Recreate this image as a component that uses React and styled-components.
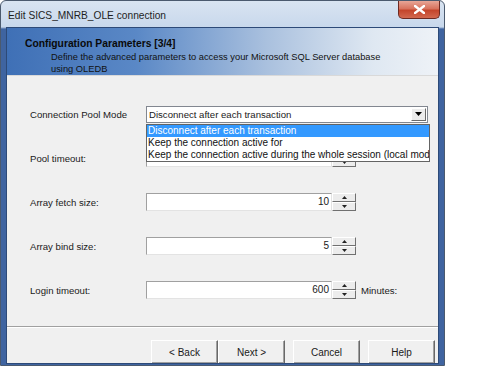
import React from 'react'
import styled, { createGlobalStyle } from 'styled-components'

const Global = createGlobalStyle`
  html, body {
    margin: 0;
    padding: 0;
    background: #ffffff;
    overflow: hidden;
  }
  body {
    font-family: "Liberation Sans", Arial, sans-serif;
    font-size: 9.6px;
    color: #1a1a1a;
  }
`

const options = [
  'Disconnect after each transaction',
  'Keep the connection active for',
  'Keep the connection active during the whole session (local mode only)',
]

const fields = [
  { label: 'Pool timeout:', value: '', unit: '' },
  { label: 'Array fetch size:', value: '10', unit: '' },
  { label: 'Array bind size:', value: '5', unit: '' },
  { label: 'Login timeout:', value: '600', unit: 'Minutes:' },
]

const Spinner = () => (
  <Spin>
    <SpinBtn>
      <svg width="5" height="3" viewBox="0 0 5 3"><path d="M2.5 0 L5 3 L0 3 Z" fill="#222" /></svg>
    </SpinBtn>
    <SpinBtn>
      <svg width="5" height="3" viewBox="0 0 5 3"><path d="M0 0 L5 0 L2.5 3 Z" fill="#222" /></svg>
    </SpinBtn>
  </Spin>
)

const App = () => {
  return (
    <>
      <Global />
      <Window>
        <TitleBar>
          <Title>Edit SICS_MNRB_OLE connection</Title>
          <Close>
            <svg width="11" height="9" viewBox="0 0 11 9">
              <path d="M1 1 L10 8 M10 1 L1 8" stroke="#fff" strokeWidth="2.4" strokeLinecap="square" />
            </svg>
          </Close>
        </TitleBar>
        <Client>
          <Banner>
            <BannerTitle>Configuration Parameters [3/4]</BannerTitle>
            <BannerText>
              Define the advanced parameters to access your Microsoft SQL Server database<br />using OLEDB
            </BannerText>
          </Banner>
          <Body>
            <Form>
              <Label>Connection Pool Mode</Label>
              <SelectWrap>
                <Select>
                  <span>{options[0]}</span>
                  <Arrow>
                    <svg width="7" height="4" viewBox="0 0 7 4"><path d="M0 0 L7 0 L3.5 4 Z" fill="#000" /></svg>
                  </Arrow>
                </Select>
                <DropList>
                  {options.map((o, i) => (
                    <Option key={o} active={i === 0}>{o}</Option>
                  ))}
                </DropList>
              </SelectWrap>
              {fields.map(f => (
                <React.Fragment key={f.label}>
                  <Label>{f.label}</Label>
                  <FieldRow>
                    <Input>{f.value}</Input>
                    <Spinner />
                    {f.unit && <Unit>{f.unit}</Unit>}
                  </FieldRow>
                </React.Fragment>
              ))}
            </Form>
            <Separator />
            <Buttons>
              <Button>&lt; Back</Button>
              <Button>Next &gt;</Button>
              <Button gap>Cancel</Button>
              <Button gap>Help</Button>
            </Buttons>
          </Body>
        </Client>
      </Window>
    </>
  )
}

export default App

const Window = styled.div`
width: 445px;
height: 366px;
box-sizing: border-box;
border: 1px solid #4b5a6e;
border-radius: 6px 6px 0 0;
background: linear-gradient(to bottom, #d9e4f1 0px, #c8d8ec 26px, #3f64a0 28px, #3f64a0 100%);
display: flex;
flex-direction: column;
padding: 0 5px 1px 5px;
`

const TitleBar = styled.div`
height: 26px;
display: flex;
align-items: flex-start;
flex-shrink: 0;
`

const Title = styled.div`
font-size: 10.2px;
color: #1e1e1e;
padding: 9px 0 0 2px;
`

const Close = styled.div`
margin-left: auto;
margin-right: -1px;
width: 42px;
height: 18px;
box-sizing: border-box;
border: 1px solid #6d2a22;
border-top: none;
border-radius: 0 0 5px 5px;
background: linear-gradient(to bottom, #e8a697 0%, #d8735e 45%, #c4452b 55%, #d2684f 100%);
display: flex;
align-items: center;
justify-content: center;
`

const Client = styled.div`
flex: 1;
display: flex;
flex-direction: column;
border: 1px solid #2d4a78;
background: #f0f0f0;
min-height: 0;
overflow: hidden;
`

const Banner = styled.div`
height: 51px;
box-sizing: border-box;
padding: 10px 0 0 18px;
background: linear-gradient(to right, #3f70b6 0%, #5a88c6 30%, #a9c0de 60%, #dfe8f2 85%, #eef2f7 100%);
border-bottom: 1px solid #d9d9d9;
`

const BannerTitle = styled.div`
font-weight: bold;
font-size: 10.3px;
color: #0a0a0a;
`

const BannerText = styled.div`
margin-top: 2px;
padding-left: 26px;
line-height: 12px;
font-size: 9.3px;
color: #111;
`

const Body = styled.div`
flex: 1;
display: flex;
flex-direction: column;
`

const Form = styled.div`
display: grid;
grid-template-columns: 116px 1fr;
grid-auto-rows: 18px;
row-gap: 26px;
align-items: center;
padding: 29px 0 0 23px;
`

const Label = styled.div`
color: #1a1a1a;
`

const SelectWrap = styled.div`
position: relative;
width: 282px;
height: 17px;
`

const Select = styled.div`
height: 17px;
box-sizing: border-box;
border: 1px solid #828790;
background: #fff;
display: flex;
align-items: center;
padding-left: 2px;
span { flex: 1; }
`

const Arrow = styled.div`
width: 15px;
height: 13px;
box-sizing: border-box;
margin-right: 1px;
border: 1px solid;
border-color: #fff #6a6a6a #6a6a6a #fff;
background: #ececec;
display: flex;
align-items: center;
justify-content: center;
`

const DropList = styled.div`
position: absolute;
left: 0;
top: 18px;
width: 284px;
box-sizing: border-box;
border: 1px solid #646464;
background: #fff;
z-index: 5;
overflow: hidden;
`

const Option = styled.div`
height: 12px;
line-height: 12px;
padding-left: 1px;
white-space: nowrap;
font-size: 10px;
background: ${p => (p.active ? '#3399ff' : '#fff')};
color: ${p => (p.active ? '#fff' : '#111')};
`

const FieldRow = styled.div`
display: flex;
align-items: center;
`

const Input = styled.div`
width: 186px;
height: 18px;
box-sizing: border-box;
border: 1px solid;
border-color: #a0a0a0 #e3e3e3 #e3e3e3 #a0a0a0;
background: #fff;
text-align: right;
padding-right: 2px;
line-height: 16px;
font-size: 10px;
`

const Spin = styled.div`
width: 24px;
height: 18px;
display: flex;
flex-direction: column;
`

const SpinBtn = styled.div`
flex: 1;
box-sizing: border-box;
border: 1px solid;
border-color: #fff #707070 #707070 #fff;
background: #ececec;
display: flex;
align-items: center;
justify-content: center;
`

const Unit = styled.div`
margin-left: 5px;
`

const Separator = styled.div`
margin-top: 27px;
height: 0;
border-top: 1px solid #a0a0a0;
border-bottom: 1px solid #fff;
`

const Buttons = styled.div`
display: flex;
padding: 12px 0 0 144px;
`

const Button = styled.div`
width: 67px;
height: 24px;
flex-shrink: 0;
margin-left: ${p => (p.gap ? '8px' : '0')};
box-sizing: border-box;
border: 1px solid;
border-color: #fff #696969 #696969 #fff;
box-shadow: inset -1px -1px 0 #a0a0a0;
background: #f0f0f0;
display: flex;
align-items: center;
justify-content: center;
font-size: 10px;
`
